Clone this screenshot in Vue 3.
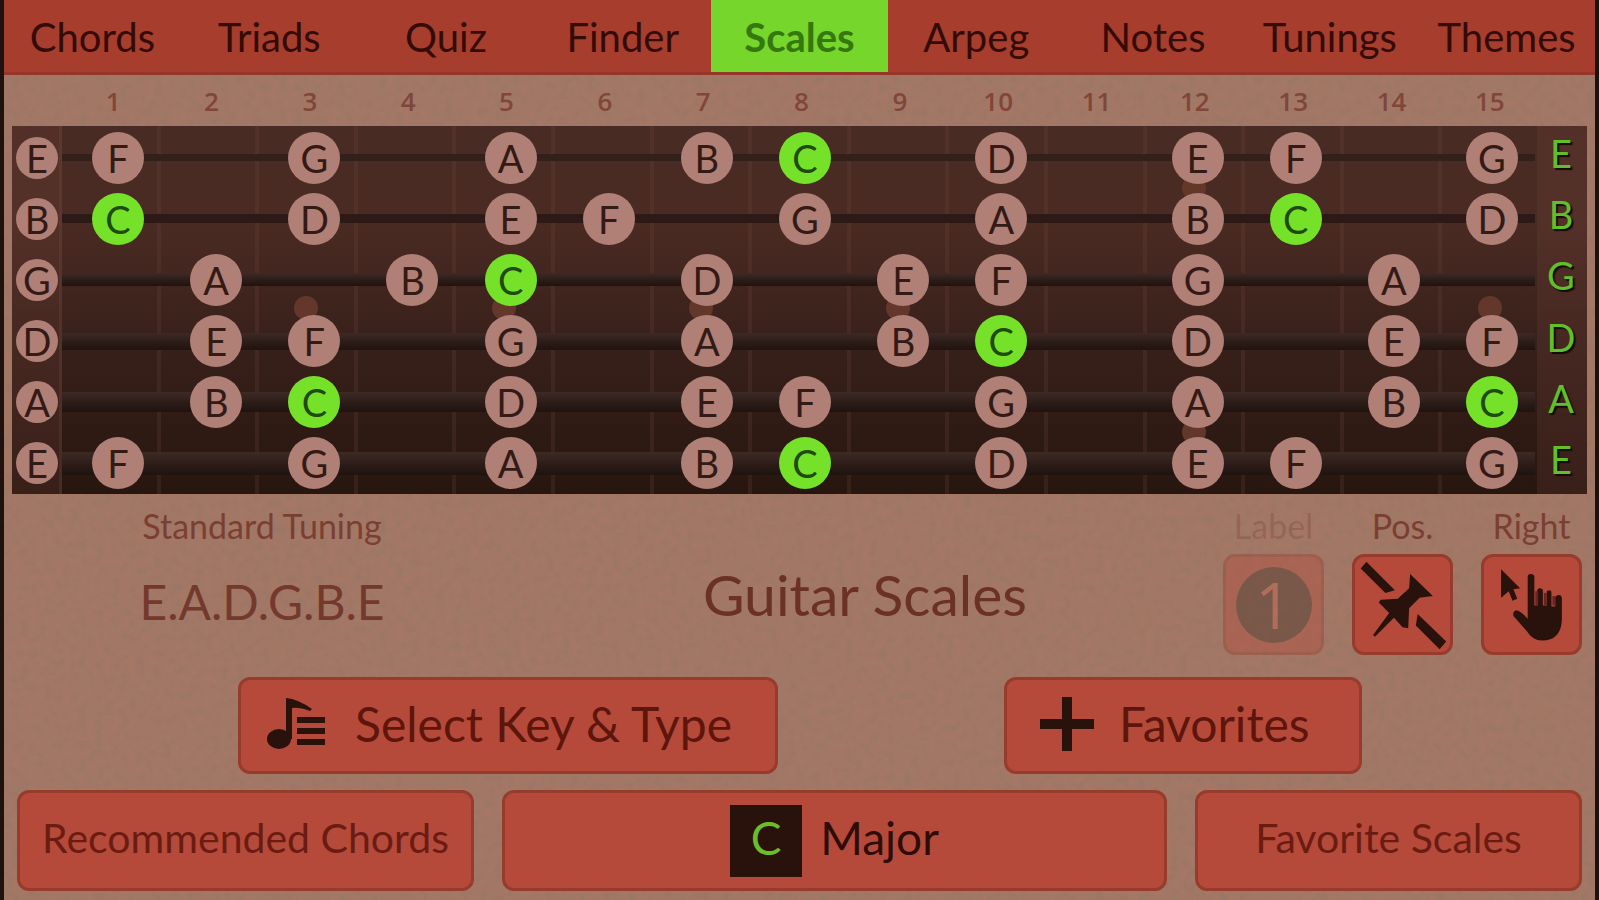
<script setup>
import { ref } from 'vue'

const tabs = ['Chords', 'Triads', 'Quiz', 'Finder', 'Scales', 'Arpeg', 'Notes', 'Tunings', 'Themes']
const active = ref('Scales')

const scale = ['C', null, 'D', null, 'E', 'F', null, 'G', null, 'A', null, 'B']
const tuning = [
  { open: 'E', pitch: 4, gauge: 'g1' },
  { open: 'B', pitch: 11, gauge: 'g2' },
  { open: 'G', pitch: 7, gauge: 'g3' },
  { open: 'D', pitch: 2, gauge: 'g4' },
  { open: 'A', pitch: 9, gauge: 'g5' },
  { open: 'E', pitch: 4, gauge: 'g6' },
]
const noteAt = (string, fret) => scale[(string.pitch + fret) % 12]
const inlays = { 3: 'mid', 5: 'mid', 7: 'mid', 9: 'mid', 12: 'pair', 15: 'mid' }
</script>

<template>
  <div class="app">
    <svg class="paper" aria-hidden="true">
      <filter id="grain" x="0" y="0" width="100%" height="100%">
        <feTurbulence type="fractalNoise" baseFrequency="0.12" numOctaves="3" seed="4" />
        <feColorMatrix values="0 0 0 0 0.2  0 0 0 0 0.16  0 0 0 0 0.12  0.9 0 0 0 -0.26" />
      </filter>
      <rect width="100%" height="100%" filter="url(#grain)" />
    </svg>

    <nav class="tabs">
      <button
        v-for="t in tabs"
        :key="t"
        type="button"
        class="tab"
        :class="{ active: t === active }"
        @click="active = t"
      >{{ t }}</button>
    </nav>

    <main class="content">
      <div class="numbers">
        <span v-for="n in 15" :key="n">{{ n }}</span>
      </div>

      <section class="board">
        <div class="frets">
          <div class="nut"></div>
          <div v-for="n in 15" :key="n" class="fret" :class="inlays[n]">
            <i v-if="inlays[n]" class="inlay"></i>
            <i v-if="inlays[n] === 'pair'" class="inlay"></i>
          </div>
          <div class="nut end"></div>
        </div>
        <div class="strings">
          <div v-for="(s, i) in tuning" :key="i" class="string">
            <div class="cell"><span class="note open">{{ s.open }}</span></div>
            <div class="run">
              <div class="wire" :class="s.gauge"></div>
              <div class="notes">
                <div v-for="n in 15" :key="n" class="cell">
                  <span v-if="noteAt(s, n)" class="note" :class="{ root: noteAt(s, n) === 'C' }">{{ noteAt(s, n) }}</span>
                </div>
              </div>
            </div>
            <div class="key">{{ s.open }}</div>
          </div>
        </div>
      </section>

      <section class="info">
        <div class="tuning">
          <span class="caption">Standard Tuning</span>
          <span class="big">E.A.D.G.B.E</span>
        </div>
        <h1 class="title">Guitar Scales</h1>
        <div class="tools">
          <div class="tool off">
            <label for="t-label" class="caption">Label</label>
            <button id="t-label" type="button" class="btn square" disabled>
              <span class="disc">1</span>
            </button>
          </div>
          <div class="tool">
            <label for="t-pos" class="caption">Pos.</label>
            <button id="t-pos" type="button" class="btn square">
              <svg viewBox="0 0 100 100" aria-hidden="true">
                <path d="M12 5 L42 35 L32 38 L6 12 Z M66 60 L96 89 L89 97 L64 72 Z" />
                <path d="M58 18 L82 41 L68 43 L57 54 L56 75 L50 74 L41 64 L21 84 L19 82 L36 59 L25 48 L27 45 L45 44 L57 33 Z" />
              </svg>
            </button>
          </div>
          <div class="tool">
            <label for="t-hand" class="caption">Right</label>
            <button id="t-hand" type="button" class="btn square">
              <svg viewBox="0 0 100 100" aria-hidden="true">
                <path d="M18 13 L38 33 L31 34 L35 44 L30 46 L26 36 L18 43 Z" />
                <path d="M46 21 Q46 18 49 18 Q53 18 53 21 V51 H56 V36 Q56 33 59 33 Q62 33 62 36 V51 H66 V37 Q66 35 69 35 Q71 35 71 38 V52 H75 V42 Q76 40 79 40 Q82 40 82 44 V66 Q81 88 61 88 Q51 88 45 78 L31 62 Q30 57 34 56 Q38 56 46 65 Z" />
                <path class="shade" d="M54 36 H57 V51 H54 Z M63 38 H66 V51 H63 Z M72 41 H75 V51 H72 Z" />
              </svg>
            </button>
          </div>
        </div>
      </section>

      <section class="actions">
        <button type="button" class="btn wide">
          <svg class="ic" viewBox="0 0 60 54" aria-hidden="true">
            <ellipse cx="12" cy="42" rx="12" ry="10" />
            <path d="M19 1 Q31 2 45 12 L43 14 Q32 10 25 11 V42 H19 Z" />
            <path d="M30 20 H58 V26 H30 Z M30 31 H58 V37 H30 Z M30 42 H58 V48 H30 Z" />
          </svg>
          <span>Select Key &amp; Type</span>
        </button>
        <button type="button" class="btn wide fav">
          <svg class="ic" viewBox="0 0 56 54" aria-hidden="true">
            <path d="M23 0 H33 V22 H55 V32 H33 V54 H23 V32 H1 V22 H23 Z" />
          </svg>
          <span>Favorites</span>
        </button>
      </section>

      <section class="bottom">
        <button type="button" class="btn small">Recommended Chords</button>
        <button type="button" class="btn current"><span class="root-box">C</span><span class="kind">Major</span></button>
        <button type="button" class="btn small">Favorite Scales</button>
      </section>
    </main>
  </div>
</template>

<style>
body {
  background: #a07362;
}
</style>

<style scoped>
.app {
  position: relative;
  min-height: 100vh;
  box-sizing: border-box;
  border-left: 4px solid #1f110d;
  border-right: 4px solid #1f110d;
  background: #a57866;
  font-family: Lato, "Open Sans", sans-serif;
  color: #2b100a;
  overflow: hidden;
}
.paper {
  position: absolute;
  inset: 0;
  width: 100%;
  height: 100%;
  opacity: 0.45;
}
button {
  font-family: inherit;
  color: inherit;
  margin: 0;
  padding: 0;
  border: 0;
  background: none;
}
.tabs {
  position: relative;
  display: grid;
  grid-template-columns: repeat(9, 1fr);
  height: 72px;
  background: #a63d2d;
  border-bottom: 3px solid #94362a;
}
.tab {
  padding-top: 2px;
  font-size: 40px;
  line-height: 48px;
  color: #330c07;
}
.tab.active {
  background: #76d62b;
  color: #35780f;
  font-weight: 700;
}
.content {
  position: relative;
  padding: 0 8px;
}
.numbers {
  display: grid;
  grid-template-columns: repeat(15, 1fr);
  padding: 0 48px 0 52px;
  height: 51px;
  line-height: 52px;
  text-align: center;
  font-family: "Open Sans", sans-serif;
  font-size: 26px;
  font-weight: 600;
  color: #804639;
}
.board {
  position: relative;
  height: 368px;
  background: linear-gradient(#482b24, #4a2b23 25%, #38201a 60%, #27160f);
}
.frets {
  position: absolute;
  inset: 0;
  display: grid;
  grid-template-columns: 50px repeat(15, 1fr) 46px;
}
.nut {
  background: rgba(120, 70, 60, 0.22);
  border-right: 3px solid rgba(120, 75, 65, 0.25);
  box-sizing: border-box;
}
.nut.end {
  border-right: 0;
}
.fret {
  display: flex;
  flex-direction: column;
  align-items: center;
  justify-content: center;
  box-sizing: border-box;
  padding-bottom: 4px;
  border-right: 4px solid rgba(115, 75, 62, 0.22);
}
.fret.pair {
  justify-content: space-between;
  padding: 50px 0;
}
.inlay {
  width: 24px;
  height: 24px;
  border-radius: 50%;
  background: #63382a;
}
.strings {
  position: relative;
  box-sizing: border-box;
  height: 100%;
  padding-top: 1px;
  display: grid;
  grid-template-rows: repeat(6, 1fr);
}
.string {
  display: grid;
  grid-template-columns: 50px 1fr 46px;
}
.run {
  position: relative;
  display: grid;
  align-items: center;
}
.run > * {
  grid-area: 1 / 1;
}
.notes {
  display: grid;
  grid-template-columns: repeat(15, 1fr);
  padding-left: 7px;
}
.cell {
  display: flex;
  align-items: center;
  justify-content: center;
}
.wire {
  margin-right: 6px;
  background: linear-gradient(#3d2a24, #2a1b17 60%, #1f1310);
}
.g1 { height: 7px; background: #33201b; }
.g2 { height: 9px; background: #2d1a16; }
.g3 { height: 13px; }
.g4 { height: 17px; }
.g5 { height: 20px; }
.g6 { height: 23px; }
.note {
  width: 52px;
  height: 52px;
  line-height: 52px;
  border-radius: 50%;
  background: #b07f76;
  text-align: center;
  font-size: 38px;
  color: #331a15;
}
.note.open {
  width: 42px;
  height: 42px;
  line-height: 42px;
}
.note.root {
  background: #75e229;
  color: #1f4a10;
}
.key {
  padding-right: 6px;
  text-align: center;
  font-size: 38px;
  line-height: 52px;
  color: #5fc02a;
  text-shadow: 2px 2px 1px #150a07;
}
.info {
  display: grid;
  grid-template-columns: 500px 1fr 368px;
  height: 161px;
  padding-right: 1px;
}
.caption {
  font-size: 34px;
  line-height: 40px;
  color: #7b3f32;
}
.tuning {
  display: flex;
  flex-direction: column;
  align-items: center;
  gap: 28px;
  padding-top: 12px;
}
.big {
  font-size: 48px;
  line-height: 56px;
  color: #74392d;
}
.title {
  margin: 0;
  padding-top: 70px;
  text-align: center;
  font-size: 57px;
  line-height: 60px;
  font-weight: 400;
  color: #6b3126;
}
.tools {
  display: flex;
  justify-content: flex-end;
  gap: 28px;
  padding: 12px 4px 0 0;
}
.tool {
  display: flex;
  flex-direction: column;
  align-items: center;
  gap: 8px;
  width: 101px;
}
.tool.off .caption {
  opacity: 0.3;
}
.btn {
  box-sizing: border-box;
  background: #b54a3a;
  border: 3px solid #973c2d;
  border-radius: 12px;
}
.square {
  width: 101px;
  height: 101px;
}
.square svg {
  display: block;
  width: 100%;
  height: 100%;
  fill: #2a120c;
}
.square .shade {
  fill: #6b2420;
}
.tool.off .btn {
  display: flex;
  align-items: center;
  justify-content: center;
  opacity: 0.4;
}
.disc {
  width: 76px;
  height: 76px;
  border-radius: 50%;
  background: #3f2c20;
  color: #c8604a;
  font-family: "Open Sans", sans-serif;
  font-size: 64px;
  line-height: 76px;
}
.actions {
  display: flex;
  height: 97px;
  padding-left: 226px;
  gap: 226px;
  margin-top: 22px;
}
.wide {
  width: 540px;
  display: flex;
  align-items: center;
  padding: 0 0 4px 26px;
  gap: 28px;
  font-size: 48px;
  color: #5e150c;
}
.wide.fav {
  width: 358px;
  padding-left: 30px;
  gap: 22px;
}
.ic {
  width: 60px;
  height: 54px;
  fill: #2a120c;
}
.bottom {
  display: grid;
  grid-template-columns: 457fr 665fr 387fr;
  gap: 28px;
  padding: 0 5px;
  margin-top: 16px;
}
.bottom .btn {
  height: 101px;
}
.bottom .small {
  padding-bottom: 6px;
  font-size: 41px;
  color: #6b1c12;
}
.current {
  display: flex;
  align-items: center;
  justify-content: center;
  gap: 18px;
  font-size: 46px;
  color: #2f0c06;
}
.kind {
  padding-bottom: 6px;
}
.root-box {
  width: 72px;
  height: 72px;
  line-height: 66px;
  background: #2a120c;
  color: #6bbd2a;
}
</style>
